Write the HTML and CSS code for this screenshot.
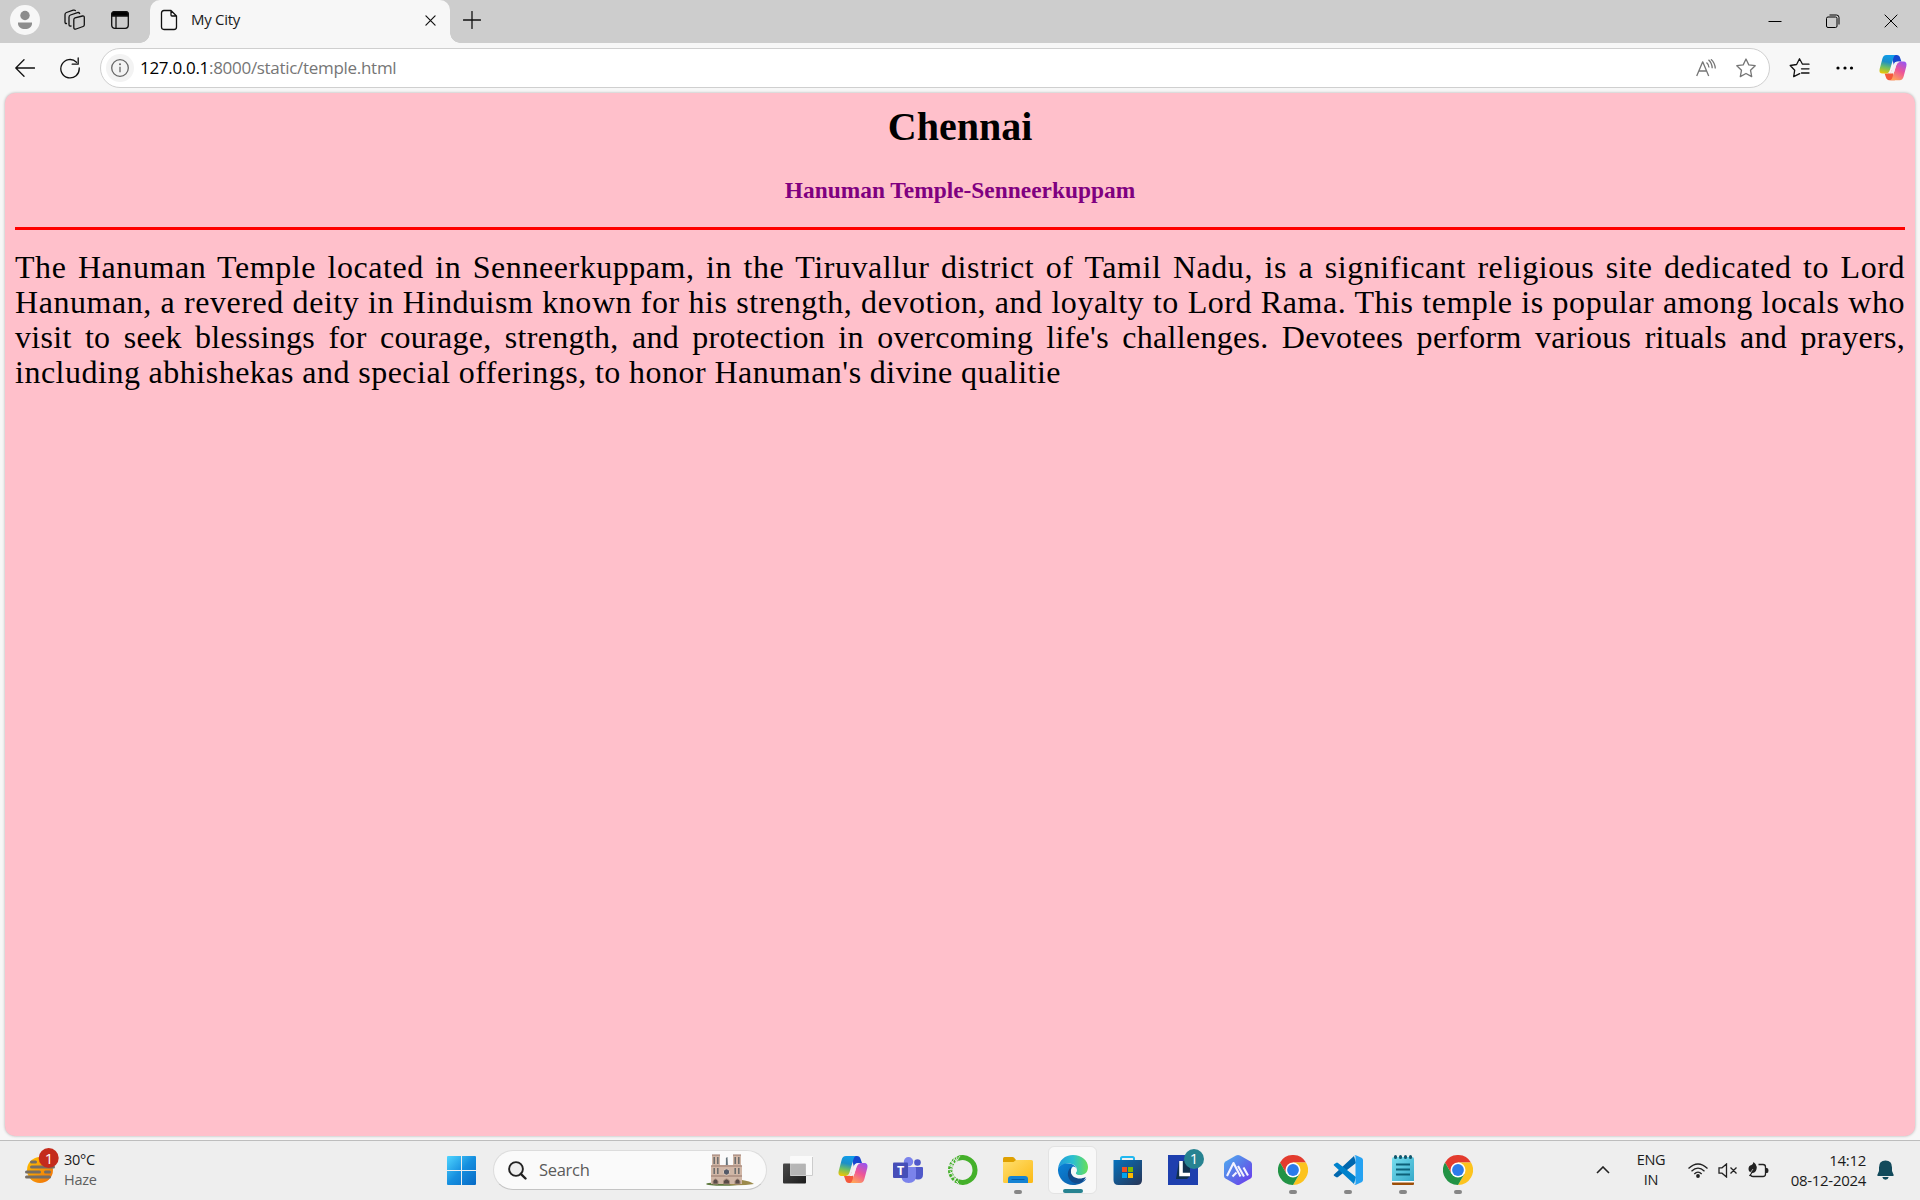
FILE: index.html
```html
<!DOCTYPE html>
<html lang="en">
<head>
<meta charset="utf-8">
<title>My City</title>
<link rel="stylesheet" href="styles.css">
</head>
<body>
<svg class="defs" aria-hidden="true">
  <defs>
    <linearGradient id="win" x1="0" y1="0" x2="1" y2="1"><stop offset="0" stop-color="#4fd5ff"/><stop offset=".5" stop-color="#168fdf"/><stop offset="1" stop-color="#0669c5"/></linearGradient>
    <linearGradient id="cpA" x1=".4" y1="0" x2=".2" y2="1"><stop offset="0" stop-color="#109ce8"/><stop offset=".35" stop-color="#1c8fc8"/><stop offset=".65" stop-color="#6fbf62"/><stop offset="1" stop-color="#f4c600"/></linearGradient>
    <linearGradient id="cpB" x1=".8" y1="0" x2=".3" y2="1"><stop offset="0" stop-color="#9a55ee"/><stop offset=".5" stop-color="#ee5597"/><stop offset="1" stop-color="#ffa35a"/></linearGradient>
    <linearGradient id="folder" x1="0" y1="0" x2="1" y2="1"><stop offset="0" stop-color="#ffdf70"/><stop offset="1" stop-color="#fcb913"/></linearGradient>
    <linearGradient id="edgeTop" x1="0" y1=".5" x2="1" y2=".5"><stop offset="0" stop-color="#2199dc"/><stop offset=".5" stop-color="#2bc0d0"/><stop offset="1" stop-color="#68df57"/></linearGradient>
    <linearGradient id="edgeLow" x1="0" y1="0" x2="1" y2="1"><stop offset="0" stop-color="#0b83d8"/><stop offset="1" stop-color="#0c59a4"/></linearGradient>
    <linearGradient id="store" x1="0" y1="0" x2="1" y2="1"><stop offset="0" stop-color="#0672bd"/><stop offset="1" stop-color="#273455"/></linearGradient>
    <linearGradient id="hex" x1="0" y1="0" x2="1" y2="1"><stop offset="0" stop-color="#4eb0f1"/><stop offset=".5" stop-color="#5b73e8"/><stop offset="1" stop-color="#6d34ef"/></linearGradient>
    <linearGradient id="note" x1="0" y1="0" x2="1" y2="1"><stop offset="0" stop-color="#78deee"/><stop offset="1" stop-color="#36a9c9"/></linearGradient>
    <linearGradient id="sun" x1="0" y1="0" x2="1" y2="1"><stop offset="0" stop-color="#ffc400"/><stop offset="1" stop-color="#ef6c0b"/></linearGradient>
    <linearGradient id="dark" x1="0" y1="0" x2="1" y2="1"><stop offset="0" stop-color="#4a4a4a"/><stop offset="1" stop-color="#1c1c1c"/></linearGradient>
    <symbol id="copilot" viewBox="0 0 30 30">
      <path d="M13 1h6c2 0 3 1 3.600 3L24 8h-3c-3 0-4 1-5 4z" fill="#1747cf"/>
      <path d="M17 28h-6c-2 0-3-1-3.600-3L6 21h3c3 0 4-1 5-4z" fill="#f4593b"/>
      <path d="M8 1h10c-1.500.5-2 1.500-2.600 3.500l-3.600 12C10.800 20 9.500 21 7 21H4c-3 0-4-2-3.300-5L3.600 5C4.300 2.500 5.500 1 8 1z" fill="url(#cpA)"/>
      <path d="M22 28H12c1.500-.5 2-1.500 2.600-3.500l3.600-12C19.200 9 20.500 8 23 8h3c3 0 4 2 3.300 5l-2.900 11c-.7 2.500-1.900 4-4.400 4z" fill="url(#cpB)"/>
      <path d="M18.800 8.200h3.700q-3 .8-3.900 3.800l-2.200 7q-.7 2-2.600 2h-3.500q2.700-1 3.500-3.800l2.200-6.500q.7-2.500 2.800-2.500z" fill="#f4f1f2"/>
    </symbol>
    <symbol id="chrome" viewBox="0 0 30 30">
      <path d="M2 7.500A15 15 0 0 1 28 7.500H15L8.500 18.700z" fill="#e33b2e"/>
      <path d="M28 7.500A15 15 0 0 1 15 30l6.500-11.300L15 7.500z" fill="#fcc31e"/>
      <path d="M2 7.500A15 15 0 0 0 15 30l6.500-11.300H8.500z" fill="#229345"/>
      <circle cx="15" cy="15" r="7.500" fill="#fff"/><circle cx="15" cy="15" r="5.900" fill="#2c7bea"/>
    </symbol>
  </defs>
</svg>

<header class="tabstrip">
  <svg class="profile" width="30" height="30" viewBox="0 0 30 30"><circle cx="15" cy="15" r="15" fill="#f7f7f7"/><circle cx="15" cy="10.500" r="4.700" fill="#8d8d8d"/><path d="M8 17.500h14v1.200c0 3-3 5.300-7 5.300s-7-2.300-7-5.300z" fill="#8d8d8d"/></svg>
  <svg class="workspaces line" width="22" height="22" viewBox="0 0 22 22"><path d="M11 8.900l7.500-1.900q1.800-.4 1.800 1.500v7.300q0 1.300-1.200 1.700l-7 2.500q-2.300.7-2.300-1.500v-7.800q0-1.400 1.200-1.800zM7 17l-.8.100Q5 17 5 15.800V8.300q0-1.800 1.500-2.300l7-2.400q1.500-.4 2.200.9M2.500 14.500Q1 14.600 1 13V5.500Q1 4 2.500 3.500l6.700-2.300q1.500-.4 2.200.4"/></svg>
  <svg class="tabactions line" width="20" height="20" viewBox="0 0 20 20"><rect x="1.700" y="1.700" width="16.600" height="16.600" rx="3"/><path d="M1.700 6V4.500q0-2.800 2.800-2.800h11q2.800 0 2.800 2.800V6z" fill="#000"/><path d="M6 6v12"/></svg>
  <div class="tab">
    <svg class="line" width="18" height="22" viewBox="0 0 18 22"><path d="M4 1.500h7L16.500 7v11q0 2.500-2.500 2.500H4Q1.500 20.500 1.500 18V4Q1.500 1.500 4 1.500zM11 1.500V6q0 1 1 1h4.500"/></svg>
    <span class="tab-title">My City</span>
    <svg class="line" width="11" height="11" viewBox="0 0 12 12"><path d="M1 1l10 10M11 1L1 11"/></svg>
  </div>
  <svg class="newtab line" width="18" height="18" viewBox="0 0 18 18"><path d="M9 .5v17M.5 9h17"/></svg>
  <div class="window-buttons">
    <svg class="thin" width="14" height="14" viewBox="0 0 14 14"><path d="M.5 7.500h13"/></svg>
    <svg class="thin" width="14" height="14" viewBox="0 0 14 14"><rect x=".5" y="3" width="10.500" height="10.500" rx="1.500"/><path d="M3.500 1h7Q13 1 13 3.500v7"/></svg>
    <svg class="thin" width="14" height="14" viewBox="0 0 14 14"><path d="M.7.7l12.600 12.600M13.300.7L.7 13.300"/></svg>
  </div>
</header>

<nav class="toolbar">
  <svg class="back line" width="20" height="18" viewBox="0 0 20 18"><path d="M19.500 9H1M9 .8L.8 9 9 17.200"/></svg>
  <svg class="reload line" width="20" height="22" viewBox="0 0 20 22"><path d="M16.500 5.200A9.200 9.200 0 1 0 19.200 11M18.200 1v6.200h-6"/></svg>
  <div class="address">
    <svg width="28" height="28" viewBox="0 0 28 28"><circle cx="14" cy="14" r="14" fill="#f3f3f3"/><g fill="none" stroke="#666" stroke-width="1.300"><circle cx="14" cy="14" r="8.300"/><path d="M14 12.800v5.500"/></g><circle cx="14" cy="10.200" r="1" fill="#666"/></svg>
    <span class="url"><b>127.0.0.1</b>:8000/static/temple.html</span>
    <svg class="gray" width="20" height="18" viewBox="0 0 20 18"><path d="M.7 17L6.700 2.800 12.700 17M2.800 12h7.800M10.500 3.500q2.300 1.800 2.500 5M12.500.8Q16 4 16.200 9.200M15 .3Q19 4 19.300 9.500"/></svg>
    <svg class="gray" width="22" height="20" viewBox="0 0 22 20"><path d="M11 1l2.800 5.900 6.400.8-4.700 4.500 1.200 6.400L11 15.500l-5.700 3.100 1.200-6.400L1.800 7.700l6.400-.8z"/></svg>
  </div>
  <svg class="favorites line" width="21" height="20" viewBox="0 0 21 20"><path d="M20 6.200h-6.500L10.500.8 7.600 6.500l-6.400 1 4.500 4.700-1 6.400 6-3M12.500 10.800H20M12.500 15H20"/></svg>
  <svg class="more" width="18" height="4" viewBox="0 0 18 4"><circle cx="2" cy="2" r="1.600"/><circle cx="9" cy="2" r="1.600"/><circle cx="15.500" cy="2" r="1.600"/></svg>
  <svg width="28" height="28"><use href="#copilot"/></svg>
</nav>

<main class="page">
  <h1>Chennai</h1>
  <h3>Hanuman Temple-Senneerkuppam</h3>
  <hr>
  <p>
    <span class="ln l1">The Hanuman Temple located in Senneerkuppam, in the Tiruvallur district of Tamil Nadu, is a significant religious site dedicated to Lord</span>
    <span class="ln l2">Hanuman, a revered deity in Hinduism known for his strength, devotion, and loyalty to Lord Rama. This temple is popular among locals who</span>
    <span class="ln l3">visit to seek blessings for courage, strength, and protection in overcoming life's challenges. Devotees perform various rituals and prayers,</span>
    <span class="ln l4">including abhishekas and special offerings, to honor Hanuman's divine qualitie</span>
  </p>
</main>

<footer class="taskbar">
  <div class="weather">
    <svg width="34" height="36" viewBox="0 0 34 36"><circle cx="15" cy="22" r="13" fill="url(#sun)"/><path d="M6.500 14h4M6.500 19h22M1.500 24h13M20.500 24h4M1.500 29h23" stroke="#746d65" stroke-width="3" stroke-linecap="round"/><circle cx="23.700" cy="10" r="10" fill="#c42b1c"/><text x="24" y="15.500" text-anchor="middle" class="badge-text">1</text></svg>
    <div class="weather-text"><span>30°C</span><span class="dim">Haze</span></div>
  </div>
  <svg class="start" width="29" height="29" viewBox="0 0 29 29"><path d="M1 0h13v14H0V1q0-1 1-1zM15 0h13q1 0 1 1v13H15zM0 15h14v14H1q-1 0-1-1zM15 15h14v13q0 1-1 1H15z" fill="url(#win)"/></svg>
  <div class="search">
    <svg width="19" height="19" viewBox="0 0 19 19"><circle cx="8" cy="8" r="6.900" fill="#eee" stroke="#222" stroke-width="1.900"/><path d="M12.800 12.800l4.700 4.700" stroke="#222" stroke-width="2.400" stroke-linecap="round"/></svg>
    <span>Search</span>
    <svg width="48" height="32" viewBox="0 0 48 32"><ellipse cx="17" cy="30" rx="17" ry="1.800" fill="#5c783d"/><path d="M22 31l14-5q8 1 12 4-12 2-26 1z" fill="#9c8a4b"/><path d="M20.200 12L21 3l.8 9z" fill="#64727a" stroke="#64727a" stroke-width=".5"/><path d="M6 1h8v10h13V1h8v10l1 1v18H5V12l1-1z" fill="#d0b6a6"/><path d="M5 12h31M5 22h31M6 1h8M27 1h8" stroke="#98796c"/><path d="M20.500 4v7" stroke="#64727a" stroke-width="1.200"/><path d="M8.200 3v7M11.800 3v7M29.200 3v7M32.800 3v7M8.200 14v6M11.800 14v6M29.200 14v6M32.800 14v6" stroke="#6a6b6b" stroke-width="1.500"/><circle cx="20.500" cy="18" r="3.200" fill="#545968" stroke="#e0cabb"/><path d="M7 30v-3q2.500-4 5 0v3zM17.500 30v-3q3-4 6 0v3zM29 30v-3q2.500-4 5 0v3z" fill="#594b47" stroke="#a4897a"/></svg>
  </div>
  <div class="apps">
    <div class="app"><svg width="30" height="30" viewBox="0 0 30 30"><rect y="8.500" width="23" height="20" rx="1" fill="url(#dark)"/><rect x="7" y="1" width="23" height="20" rx="1" fill="#fff" fill-opacity=".72"/><path d="M7.500 9h15v11.500h-15z" fill="#a8a8a8" fill-opacity=".55"/><path d="M7.500 20.500h22V2" stroke="#ccc" fill="none"/></svg></div>
    <div class="app"><svg width="30" height="30"><use href="#copilot"/></svg></div>
    <div class="app"><svg width="30" height="30" viewBox="0 0 30 30"><circle cx="15.500" cy="6.700" r="4.700" fill="#7b83eb"/><circle cx="24.500" cy="7.500" r="3.300" fill="#5059c9"/><path d="M20 12h9q1 0 1 1v6.500q0 5-5 5t-5-5z" fill="#5059c9"/><path d="M8.500 12H22q1 0 1 1v8q0 7-7.300 7T8.500 21z" fill="#7b83eb"/><rect y="7.500" width="15" height="15.500" rx="1" fill="#464eb8"/><text x="7.500" y="19.500" text-anchor="middle" class="teams-text">T</text></svg></div>
    <div class="app"><svg width="30" height="30" viewBox="0 0 30 30"><path d="M10 3.500A12.400 12.400 0 1 1 10 26.500" fill="none" stroke="#44b02a" stroke-width="5"/><path d="M10 3.500A12.400 12.400 0 0 0 10 26.500" fill="none" stroke="#44b02a" stroke-width="4.500" stroke-dasharray="2.700 1"/><path d="M12 1L7 8M8 1l1 5M3 5l4 4M1 9l5 2M2 14l4-2M1 19l5-3M3 23l4-2M6 27l3-5M11 29l-3-3M6 4l-3 8M2 16l5 8" stroke="#eee" stroke-width=".8"/></svg></div>
    <div class="app running"><svg width="30" height="30" viewBox="0 0 30 30"><path d="M0 3.500Q0 2 1.500 2h8q1 0 1.700.8L13 5v5H0z" fill="#dfa000"/><path d="M0 7h10.500L13 5h15.500Q30 5 30 6.500v20q0 1.500-1.500 1.500h-27Q0 28 0 26.500z" fill="url(#folder)"/><path d="M5 28v-4q0-3 3-3h14q3 0 3 3v4z" fill="#1583d3"/><path d="M8.500 24.500h13" stroke="#075ca4"/></svg></div>
    <div class="app active"><svg width="30" height="30" viewBox="0 0 30 30"><path d="M0 14C1 5 7 0 15 0c9 0 15 6 15 12 0 6-4 8-8 8-4 0-5-1-4-2.500 3-4.500-2-9.500-8-9C5 9 1 11 0 14z" fill="url(#edgeTop)"/><path d="M0 14c1-3.500 5-5.500 10-5.500 5 0 8.500 3 8.500 6-7-1-8 7-3 10.500 4 2.800 9 1.500 13-1.500C26 27.500 21 30 15 30 6 30-.5 22 0 14z" fill="url(#edgeLow)"/><path d="M13 12c-4 4-4 9-1 13 3 3.500 9 5 13 1 1.500-1.500 3-3.500 2.500-4-5 3-14 1.500-14.500-5q0-3 0-5z" fill="#114a8b"/><path d="M18 17.500c2-3 0-6-3-6-3 2-3 8 2 10q5 2 10-.5c-4 .5-10-.5-9-3.500z" fill="#f5f7f8"/></svg></div>
    <div class="app"><svg width="30" height="30" viewBox="0 0 30 30"><path d="M8 6V3.500Q8 2 9.500 2h10Q21 2 21 3.500V6" fill="none" stroke="#20b8f0" stroke-width="2"/><path d="M.5 5H29v20q0 5-5 5H5.500q-5 0-5-5z" fill="url(#store)"/><path d="M9 12h5v5H9z" fill="#f25022"/><path d="M15 12h5v5h-5z" fill="#7fba00"/><path d="M9 18h5v5H9z" fill="#00a4ef"/><path d="M15 18h5v5h-5z" fill="#ffb900"/></svg></div>
    <div class="app"><svg width="36" height="36" viewBox="0 0 36 36" class="with-badge"><path d="M0 6h30v30H0z" fill="#1e3fae"/><path d="M11 12L8 30h11l3-3V12z" fill="#11314f"/><path d="M13 12v13.500h9" fill="none" stroke="#fff" stroke-width="3.600"/><circle cx="26" cy="10" r="10" fill="#278391"/><text x="26" y="15.300" text-anchor="middle" class="badge-text">1</text></svg></div>
    <div class="app"><svg width="30" height="30" viewBox="0 0 30 30"><path d="M13 .5q2-.8 4 0L27.500 6.500Q29 7.500 29 9v12q0 1.500-1.500 2.500l-10.500 6q-2 1-4 0l-10.500-6Q1 22.500 1 21V9q0-1.500 1.500-2.500z" fill="url(#hex)"/><path d="M4 21L10.500 8l7 13.500M9.500 21.500l4-4M15 11l6 10.500M20.500 12.500l4.500 8" fill="none" stroke="#f4f3ff" stroke-width="2.100" stroke-linejoin="round"/></svg></div>
    <div class="app running"><svg width="30" height="30"><use href="#chrome"/></svg></div>
    <div class="app running"><svg width="30" height="30" viewBox="0 0 30 30"><path d="M1 19.500L21 1l2 7L5 22q-1 .8-2 0l-2-1.300q-.7-.7 0-1.200z" fill="#0067ae"/><path d="M1 10.500L21 29l2-7L5 8Q4 7.200 3 8L1 9.300q-.7.7 0 1.200z" fill="#0082cc"/><path d="M21 .8q1-1 2.500-.4l5 2.300Q30 3.500 30 5v20q0 1.500-1.500 2.300l-5 2.300q-1.500.6-2.500-.4 1.500.5 1.500-1.200V2Q22.500.3 21 .8z" fill="#25a2f2"/></svg></div>
    <div class="app running"><svg width="30" height="30" viewBox="0 0 30 30"><path d="M4 26h22v3q0 1-1 1H5q-1 0-1-1z" fill="#9c4e08"/><path d="M4 25h22v2.500H4z" fill="#fff"/><path d="M4 4q0-2 2-2h18q2 0 2 2v22H4z" fill="url(#note)"/><path d="M8 9.500h14M8 14.500h14M8 19.500h14" stroke="#0d6078" stroke-width="1.800"/><path d="M7.500 1.500v1M12.500 1.500v1M17.500 1.500v1M22.500 1.500v1" stroke="#13576c" stroke-width="3" stroke-linecap="round"/></svg></div>
    <div class="app running"><svg width="30" height="30"><use href="#chrome"/></svg></div>
  </div>
  <svg class="chevron" width="14" height="8" viewBox="0 0 14 8"><path d="M1 7l6-6 6 6"/></svg>
  <div class="language"><span>ENG</span><span>IN</span></div>
  <div class="status">
    <svg width="20" height="15" viewBox="0 0 20 15"><path d="M.5 5.500Q10-3.500 19.500 5.500M3.500 8.300Q10 2 16.500 8.300M6.300 11Q10 7.300 13.700 11"/><circle cx="10" cy="13" r="1.900" fill="#222" stroke="none"/></svg>
    <svg width="20" height="15" viewBox="0 0 20 15"><path d="M1 4.800h3L8.500 1v13L4 10.200H1zM12.500 4.500l6 6M18.500 4.500l-6 6"/></svg>
    <svg width="21" height="18" viewBox="0 0 21 18"><path d="M10.500 3.500H15q2.500 0 2.500 2.500v7q0 2.500-2.500 2.500H5q-2 0-2.500-1.500M1.500 15l3.500-5"/><path d="M5.500 1q3 2 3.300 5 0 5-3.800 6-4.500-.5-4.500-4Q.5 4.500 3.500 4 5 3.500 5.500 1zM18 7h1q1.500 0 1.500 2.500T19 12h-1z" fill="#222" stroke="none"/><path d="M1.500 13L5 8" stroke="#eee" stroke-width=".7"/></svg>
  </div>
  <div class="clock"><span>14:12</span><span>08-12-2024</span></div>
  <svg class="bell" width="17" height="20" viewBox="0 0 17 20"><path d="M8.500.5q6.500 0 6.500 7V11l1.700 4q.3 1-1 1H1.300q-1.300 0-1-1L2 11V7.500Q2 .5 8.500.5zM5.300 17h6.400q-.6 2.700-3.200 2.700T5.300 17z" fill="#124a5b"/></svg>
</footer>
</body>
</html>
```
FILE: styles.css
```css
* { box-sizing: border-box; }
body {
  margin: 0;
  width: 1920px;
  height: 1200px;
  overflow: hidden;
  display: flex;
  flex-direction: column;
  background: #f7f7f7;
  font-family: "Open Sans", "Noto Sans", sans-serif;
  color: #1b1b1b;
}
svg { display: block; flex: none; }
.defs { width: 0; height: 0; position: absolute; }
.line { fill: none; stroke: #111; stroke-width: 1.3; stroke-linejoin: round; stroke-linecap: round; }
.thin { fill: none; stroke: #000; stroke-width: 1; }
.gray { fill: none; stroke: #767676; stroke-width: 1.3; stroke-linejoin: round; }

.tabstrip { display: flex; align-items: center; height: 43px; padding-left: 10px; background: #cdcdcd; flex: none; }
.profile { margin-top: -3px; }
.workspaces { margin: -3px 0 0 24px; }
.tabactions { margin: -3px 0 0 24px; }
.tab {
  position: relative;
  display: flex;
  align-items: center;
  width: 300px;
  height: 43px;
  margin-left: 20px;
  padding: 0 14px 3px 10px;
  background: #f7f7f7;
  border-radius: 10px 10px 0 0;
}
.tab::before, .tab::after {
  content: "";
  position: absolute;
  bottom: 0;
  width: 10px;
  height: 10px;
}
.tab::before { left: -10px; background: radial-gradient(circle at 0 0, transparent 9.500px, #f7f7f7 10px); }
.tab::after { right: -10px; background: radial-gradient(circle at 100% 0, transparent 9.500px, #f7f7f7 10px); }
.tab-title { flex: 1; margin: -2px 0 0 13px; font-size: 15px; letter-spacing: -0.3px; }
.newtab { margin: -4px 0 0 13px; }
.window-buttons { display: flex; gap: 44px; margin-left: auto; padding: 0 22px 1px 0; }

.toolbar { display: flex; align-items: center; height: 50px; padding: 0 0 1px 15px; flex: none; }
.reload { margin-left: 25px; }
.address {
  display: flex;
  align-items: center;
  width: 1670px;
  height: 40px;
  margin-left: 20px;
  padding: 0 12px 0 5px;
  background: #fff;
  border: 1px solid #cfcfcf;
  border-radius: 20px;
}
.url { flex: 1; margin: -1px 0 0 6px; font-size: 17px; letter-spacing: -0.3px; color: #767676; white-space: nowrap; }
.url b { font-weight: 400; color: #000; }
.address .gray + .gray { margin-left: 19px; }
.favorites { margin-left: 19px; }
.more { margin: 0 25px 0 26px; }

.page {
  height: 1043px;
  margin: 0 5px;
  padding: 10px;
  flex: none;
  background: #ffc0cb;
  border-radius: 10px;
  box-shadow: 0 0 3px rgba(0, 0, 0, .3);
  color: #000;
  font-family: "Liberation Serif", serif;
}
.page h1 { margin: 1px 0 0; font-size: 40px; line-height: 46px; text-align: center; }
.page h3 { margin: 27px 0 0; font-size: 23.4px; line-height: 27px; text-align: center; color: purple; }
.page hr { margin: 23px 0 0; border: 0; height: 3px; background: #f00; }
.page p { margin: 20px 0 0; font-size: 32px; line-height: 35px; }
.ln { display: block; white-space: nowrap; letter-spacing: .55px; word-spacing: -4px; text-align: justify; text-align-last: justify; }
.l3 { letter-spacing: .3px; }
.l4 { width: 1046px; letter-spacing: .5px; }

.taskbar { display: flex; align-items: center; height: 60px; margin-top: 4px; padding-bottom: 1px; border-top: 1px solid #bdbdbd; background: #eee; flex: none; font-size: 14.5px; letter-spacing: -0.3px; line-height: 20px; }
.weather { display: flex; width: 447px; padding-left: 25px; }
.weather svg { margin-top: -2px; }
.weather-text { display: flex; flex-direction: column; margin-left: 5px; }
.dim { color: #5f5f5f; }
.badge-text { fill: #fff; font-size: 15px; }
.teams-text { fill: #fff; font-size: 12.5px; font-weight: 700; }
.search { display: flex; align-items: center; width: 274px; height: 40px; margin-left: 17px; padding: 0 12px 0 14px; border: 1px solid #dcdcdc; border-bottom-color: #c4c4c4; border-radius: 20px; background: #fafafa; }
.search span { flex: 1; margin-left: 12px; font-size: 16.5px; color: #5b5b5b; }
.apps { display: grid; grid-template-columns: repeat(13, 55px); margin-left: 3px; }
.app { position: relative; display: grid; place-items: center; height: 48px; }
.with-badge { margin: -6px 0 0 6px; }
.active { width: 49px; margin: 0 3px; border: 1px solid #e3e3e3; border-radius: 6px; background: #f8f8f8; }
.running::after, .active::after { content: ""; position: absolute; bottom: 0; left: calc(50% - 4px); width: 8px; height: 4px; border-radius: 2px; background: #868686; }
.active::after { left: calc(50% - 10px); width: 20px; background: #278391; }
.chevron { margin-left: 111px; fill: none; stroke: #222; stroke-width: 1.6; }
.language { display: flex; flex-direction: column; align-items: center; width: 40px; margin-left: 21px; }
.status { display: flex; align-items: center; gap: 10px; margin-left: 17px; fill: none; stroke: #222; stroke-width: 1.3; }
.clock { display: flex; flex-direction: column; align-items: flex-end; width: 88px; margin-left: 9px; font-size: 15px; }
.bell { margin: 0 0 0 11px; }
```
